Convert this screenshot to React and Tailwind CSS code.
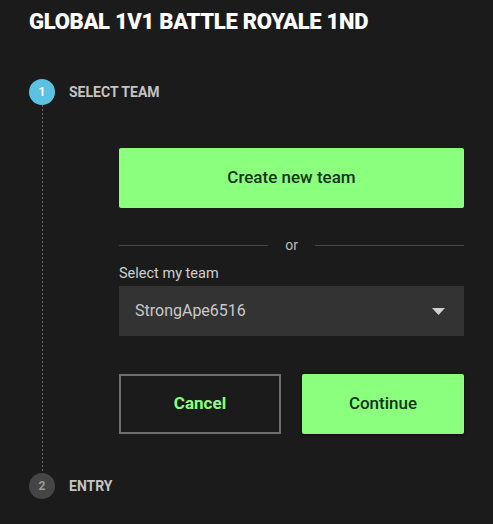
import React from 'react';

const StepDot = ({ n, active }) => (
  <div
    className={`w-[26px] h-[26px] rounded-full flex items-center justify-center text-[12px] font-bold shrink-0 ${
      active ? 'bg-[#5bc2e4] text-white' : 'bg-[#454545] text-[#9a9a9a]'
    }`}
  >
    {n}
  </div>
);

const App = () => {
  return (
    <div className="min-h-screen w-full bg-[#1b1b1b] px-[29px] pt-[9px] font-['Roboto',sans-serif]">
      <h1 className="text-[22px] leading-[26px] font-black text-white tracking-[-0.3px]">
        GLOBAL 1V1 BATTLE ROYALE 1ND
      </h1>

      {/* Step 1 */}
      <div className="flex mt-[44px]">
        <div className="flex flex-col items-center w-[26px]">
          <StepDot n="1" active />
          <div className="flex-1 w-px bg-[repeating-linear-gradient(to_bottom,#6a6a6a_0_2px,transparent_2px_4px)]" />
        </div>
        <div className="flex-1 ml-[14px]">
          <div className="h-[26px] flex items-center text-[14px] font-bold text-[#c4c4c4]">
            SELECT TEAM
          </div>
          <div className="ml-[50px] mt-[43px] pb-[39px]">
            <button className="w-full h-[60px] bg-[#8bff7e] rounded-[2px] text-[17px] font-medium text-[#173317]">
              Create new team
            </button>

            <div className="flex items-center mt-[28px] h-[18px]">
              <div className="flex-1 h-px bg-[#474747]" />
              <span className="px-[17px] text-[14px] text-[#bdbdbd] leading-none">or</span>
              <div className="flex-1 h-px bg-[#474747]" />
            </div>

            <div className="mt-[12px] text-[14.5px] leading-[16px] text-[#cfcfcf]">Select my team</div>
            <div className="mt-[4px] h-[50px] bg-[#333333] flex items-center justify-between pl-[16px] pr-[19px]">
              <span className="text-[16px] text-[#c9c9c9]">StrongApe6516</span>
              <svg width="13" height="7" viewBox="0 0 13 7">
                <path d="M0 0 L13 0 L6.5 7 Z" fill="#d0d0d0" />
              </svg>
            </div>

            <div className="grid grid-cols-2 gap-[21px] mt-[38px]">
              <button className="h-[60px] border-2 border-[#6e6e6e] text-[17px] font-bold text-[#8bff7e]">
                Cancel
              </button>
              <button className="h-[60px] bg-[#8bff7e] rounded-[2px] text-[17px] font-medium text-[#173317] shadow-[0_1px_3px_rgba(0,0,0,0.5)]">
                Continue
              </button>
            </div>
          </div>
        </div>
      </div>

      {/* Step 2 */}
      <div className="flex items-center">
        <StepDot n="2" />
        <div className="ml-[14px] text-[14px] font-bold text-[#c4c4c4]">ENTRY</div>
      </div>
    </div>
  );
};

export default App;
